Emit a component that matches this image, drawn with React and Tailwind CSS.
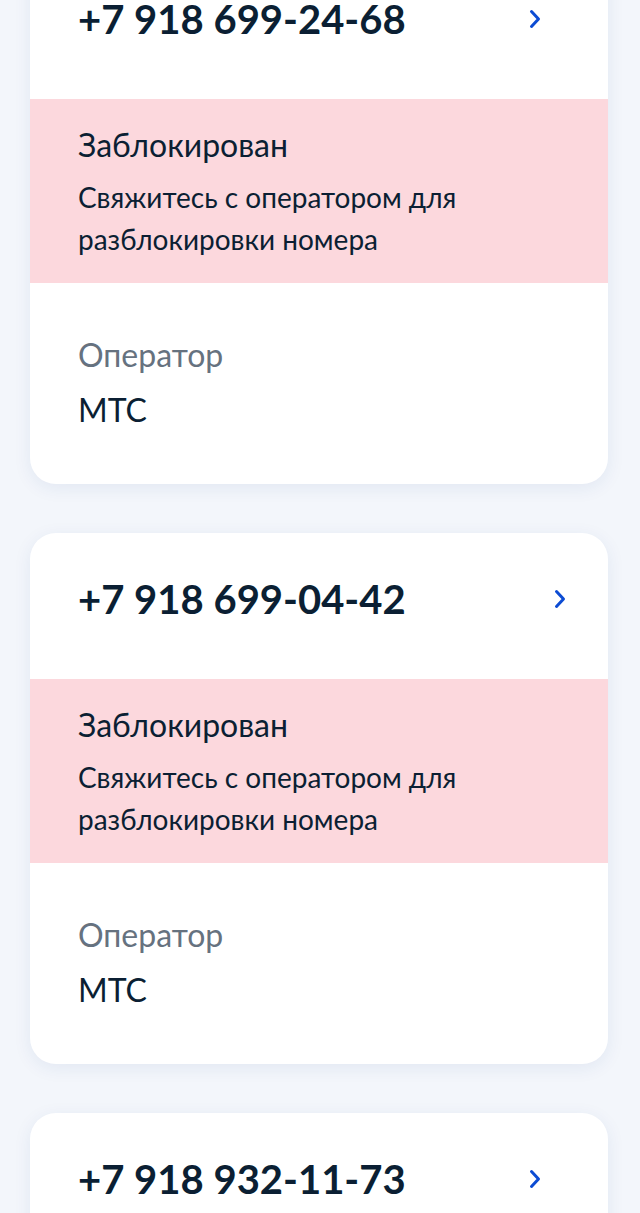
import React from "react";

const phones = [
  { number: "+7 918 699-24-68", chevronPad: "pr-[67px]", blocked: true },
  { number: "+7 918 699-04-42", chevronPad: "pr-[42px]", blocked: true },
  { number: "+7 918 932-11-73", chevronPad: "pr-[67px]", blocked: true },
];

function Chevron() {
  return (
    <svg width="12" height="20" viewBox="0 0 12 20" fill="none">
      <path d="M2.5 2.5 L9.5 10 L2.5 17.5" stroke="#0d4cd3" strokeWidth="3" strokeLinecap="round" strokeLinejoin="round" />
    </svg>
  );
}

function PhoneCard({ item }) {
  return (
    <div className="bg-white rounded-[26px] shadow-[0_4px_18px_rgba(20,60,140,0.08)] overflow-hidden">
      <div className={`flex items-center justify-between pl-[48px] ${item.chevronPad} pt-[45px] pb-[59px]`}>
        <span className="text-[40px] leading-[42px] font-bold text-[#0b1f33]">{item.number}</span>
        <Chevron />
      </div>
      {item.blocked && (
        <div className="bg-[#fcd8dd] pl-[48px] pr-6 pt-[28px] pb-[23px]">
          <div className="text-[32px] leading-[36px] text-[#0b1f33]">Заблокирован</div>
          <div className="mt-[13px] text-[28px] leading-[42px] text-[#0b1f33]">
            Свяжитесь с оператором для
            <br />
            разблокировки номера
          </div>
        </div>
      )}
      <div className="pl-[48px] pt-[54px] pb-[56px]">
        <div className="text-[32px] leading-[36px] text-[#66727f]">Оператор</div>
        <div className="mt-[19px] text-[32px] leading-[36px] text-[#0b1f33]">МТС</div>
      </div>
    </div>
  );
}

export default function App() {
  return (
    <div className="h-[1213px] overflow-hidden bg-[#f3f6fb]" style={{ fontFamily: "Lato, 'Noto Sans', sans-serif" }}>
      <div className="-mt-[47px] ml-[30px] mr-[32px] flex flex-col gap-[49px]">
        {phones.map((p) => (
          <PhoneCard key={p.number} item={p} />
        ))}
      </div>
    </div>
  );
}
